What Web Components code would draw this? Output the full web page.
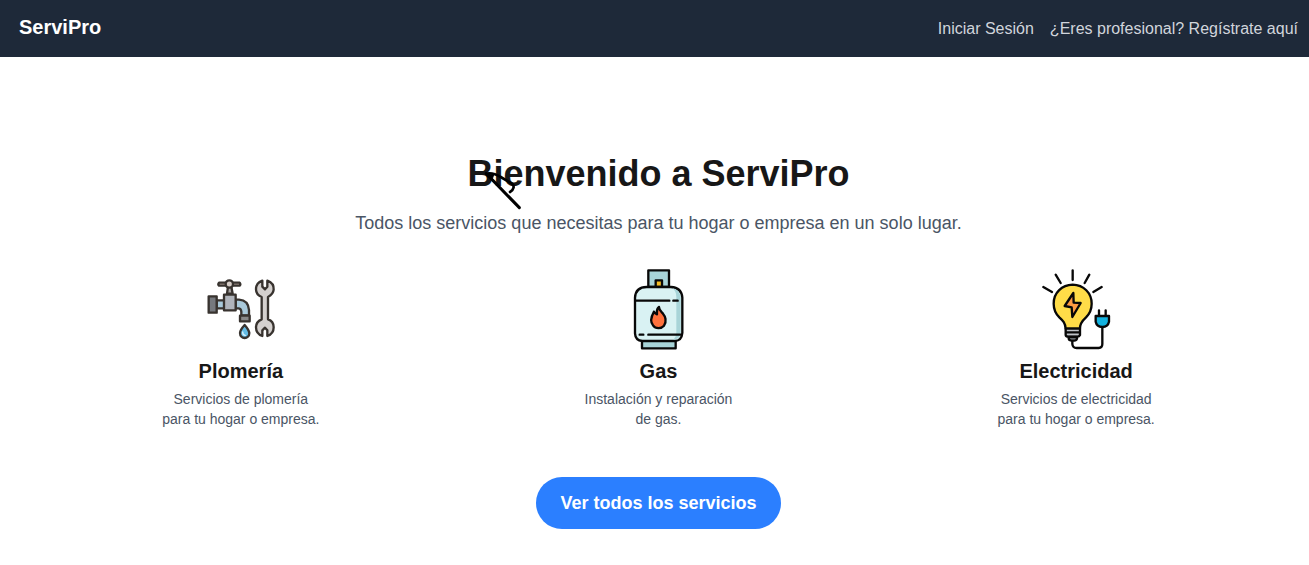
<!DOCTYPE html>
<html lang="es">
<head>
<meta charset="utf-8">
<meta name="viewport" content="width=device-width, initial-scale=1">
<title>ServiPro</title>
<style>
body { margin: 0; background: #fff; color: #171717; font-family: "Liberation Sans", Arial, sans-serif; }
</style>
</head>
<body>
<site-header>
  <nav-link slot="nav" href="#login">Iniciar Sesión</nav-link>
  <nav-link slot="nav" href="#registro">¿Eres profesional? Regístrate aquí</nav-link>
</site-header>
<home-hero>
  <span slot="title">Bienvenido a ServiPro</span>
  <span slot="lead">Todos los servicios que necesitas para tu hogar o empresa en un solo lugar.</span>
  <service-card icon="tap"><span slot="name">Plomería</span>Servicios de plomería para tu hogar o empresa.</service-card>
  <service-card icon="gas"><span slot="name">Gas</span>Instalación y reparación de gas.</service-card>
  <service-card icon="bulb"><span slot="name">Electricidad</span>Servicios de electricidad para tu hogar o empresa.</service-card>
  <pill-button slot="action">Ver todos los servicios</pill-button>
</home-hero>
<script>
class BaseElement extends HTMLElement {
  constructor() {
    super();
    this.attachShadow({ mode: 'open' });
  }
  connectedCallback() { this.shadowRoot.innerHTML = this.render(); }
}

customElements.define('site-header', class extends BaseElement {
  render() {
    return `<style>
      :host { display: block; background: #1e2939; color: #fff; }
      header { display: flex; align-items: baseline; justify-content: space-between; padding: 13px 11px 16px 19px; }
      .brand { font-size: 20px; line-height: 28px; font-weight: 700; color: inherit; text-decoration: none; }
      nav { display: flex; gap: 16px; }
    </style>
    <header><a class="brand" href="#">ServiPro</a><nav><slot name="nav"></slot></nav></header>`;
  }
});

customElements.define('nav-link', class extends BaseElement {
  render() {
    return `<style>
      :host { display: block; }
      a { color: #d1d5dc; font-size: 16px; line-height: 24px; text-decoration: none; }
      a:hover { color: #fff; }
    </style><a href="${this.getAttribute('href')}"><slot></slot></a>`;
  }
});

customElements.define('home-hero', class extends BaseElement {
  render() {
    return `<style>
      :host { display: block; }
      main { display: flex; flex-direction: column; align-items: center; padding: 96px 24px 36px 32px; text-align: center; }
      h1 { position: relative; margin: 0 0 14px; font-size: 36px; line-height: 42px; font-weight: 700; }
      h1 svg { position: absolute; left: 18px; top: 16px; width: 36px; height: 42px; overflow: visible; }
      p { margin: 0 0 32px; color: #4a5565; font-size: 18px; line-height: 28px; }
      .grid { display: grid; grid-template-columns: repeat(3, 1fr); align-self: stretch; margin: 0 0 48px; }
    </style>
    <main>
      <h1><slot name="title"></slot>
        <svg viewBox="108 72 108 126" aria-hidden="true" fill="none" stroke="#000" stroke-linecap="round" stroke-linejoin="round">
          <path d="M112 86L211 188" stroke-width="9"/>
          <path d="M112 86C128 82 142 88 155 96L189 116C197 122 195 135 183 141" stroke-width="8"/>
          <path d="M112 86L134 89L130 102Z" fill="#000" stroke-width="3"/>
        </svg>
      </h1>
      <p><slot name="lead"></slot></p>
      <div class="grid"><slot></slot></div>
      <slot name="action"></slot>
    </main>`;
  }
});

const ICONS = {
  tap: `<svg viewBox="18 27 240 240" aria-hidden="true" stroke="#38332f" stroke-width="7" stroke-linejoin="round" stroke-linecap="round">
    <path d="M96 101L99 80H109L113 101Z" fill="#aaa5a3"/>
    <path d="M72 68Q68 73 72 77H91L97 73L91 68ZM134 68Q138 73 134 77H116L110 73L116 68Z" fill="#b7a49c"/>
    <circle cx="103" cy="72" r="11" fill="#d6cdc8"/>
    <path d="M65 121H88V145H65Z" fill="#a9c9da"/>
    <path d="M122 119H132Q160 121 162 150V166H139V155Q138 145 130 145H122Z" fill="#a9c9da"/>
    <path d="M41 109H65V158H41Z" fill="#76797e"/>
    <path d="M87 104H122V151H87Z" fill="#b0b4bb"/>
    <path d="M135 167H164V184H135Z" fill="#888"/>
    <path d="M149 195Q135 210 135 219C135 239 163 239 163 219Q162 210 149 195Z" fill="#64bce5"/>
    <path d="M143 216Q143 226 151 226" fill="none" stroke="#d7f3ff" stroke-width="4"/>
    <path d="M202 62V80L210 88L217 80V62C230 67 237 77 236 89C235 101 228 106 219 111V178C229 181 236 190 236 202C236 215 229 224 217 228V211L210 203L202 211V228C190 224 183 215 183 202C183 190 190 182 200 178V111C190 107 183 100 183 88C183 76 190 66 202 62Z" fill="#d4d0ce"/>
  </svg>`,
  gas: `<svg viewBox="22 26 240 240" aria-hidden="true" stroke="#080808" stroke-width="7" stroke-linejoin="round" stroke-linecap="round">
    <path d="M113 30H175V80H113Z" fill="#a8d4d8"/>
    <path d="M135 80V60H154V80Z" fill="#f5bd25"/>
    <path d="M94 240H195V264H94Z" fill="#a8d4d8"/>
    <path d="M73 112Q75 80 108 80H181Q213 82 215 112V218Q213 241 193 242H95Q74 240 73 219Z" fill="#d9f2f3"/>
    <path d="M185 84Q206 87 210 111V218Q207 237 188 238Q197 230 197 216V110Q197 92 185 84Z" fill="#a8d4d8" stroke="none"/>
    <path d="M76 121H176M188 121H201M87 223H98M113 223H210" fill="none"/>
    <path d="M145 140C136 147 139 153 139 162Q133 160 130 154C120 172 120 187 127 195C135 206 151 206 160 196C169 183 164 168 157 160C150 153 145 150 145 140Z" fill="#ff713c"/>
  </svg>`,
  bulb: `<svg viewBox="24 26 240 240" aria-hidden="true" stroke="#080808" stroke-width="7" stroke-linejoin="round" stroke-linecap="round">
    <path d="M134 30V59M83 43L98 68M184 43L170 68M46 80L72 95M221 80L196 95" fill="none"/>
    <path d="M133 237V251Q134 263 146 263H212Q223 262 223 251V200" fill="none"/>
    <path d="M113 205C112 188 105 181 94 171C84 161 77 147 77 130C77 96 102 74 134 73C167 74 191 98 191 130C191 148 184 161 174 171C163 181 155 190 156 205Z" fill="#ffdc48"/>
    <path d="M136 98L110 137L131 141L133 170L158 128L137 127Z" fill="#ff9b42"/>
    <path d="M113 205H156V224Q154 229 148 229H121Q114 229 113 224Z" fill="#bfc3c8"/>
    <path d="M115 216H154" fill="none"/>
    <path d="M122 230H147V235Q145 241 139 241H130Q122 240 122 234Z" fill="#858a90"/>
    <path d="M213 150V166M233 150V166" fill="none"/>
    <path d="M203 167H243V184Q240 199 223 200Q206 199 203 184Z" fill="#13b2df"/>
  </svg>`
};

customElements.define('service-card', class extends BaseElement {
  render() {
    return `<style>
      :host { display: block; }
      article { display: flex; flex-direction: column; align-items: center; }
      svg { display: block; width: 80px; height: 80px; overflow: visible; }
      h2 { margin: 8px 0 4px; font-size: 20px; line-height: 28px; font-weight: 700; }
      p { margin: 0; max-width: 160px; color: #4a5565; font-size: 14px; line-height: 20px; }
    </style>
    <article>${ICONS[this.getAttribute('icon')]}<h2><slot name="name"></slot></h2><p><slot></slot></p></article>`;
  }
});

customElements.define('pill-button', class extends BaseElement {
  render() {
    return `<style>
      :host { display: block; }
      button { display: block; margin: 0; padding: 12px 24px; border: 0; border-radius: 26px; background: #2b7fff; color: #fff; font: 700 18px/28px "Liberation Sans", Arial, sans-serif; cursor: pointer; }
      button:hover { background: #155dfc; }
    </style><button type="button"><slot></slot></button>`;
  }
});
</script>
</body>
</html>
